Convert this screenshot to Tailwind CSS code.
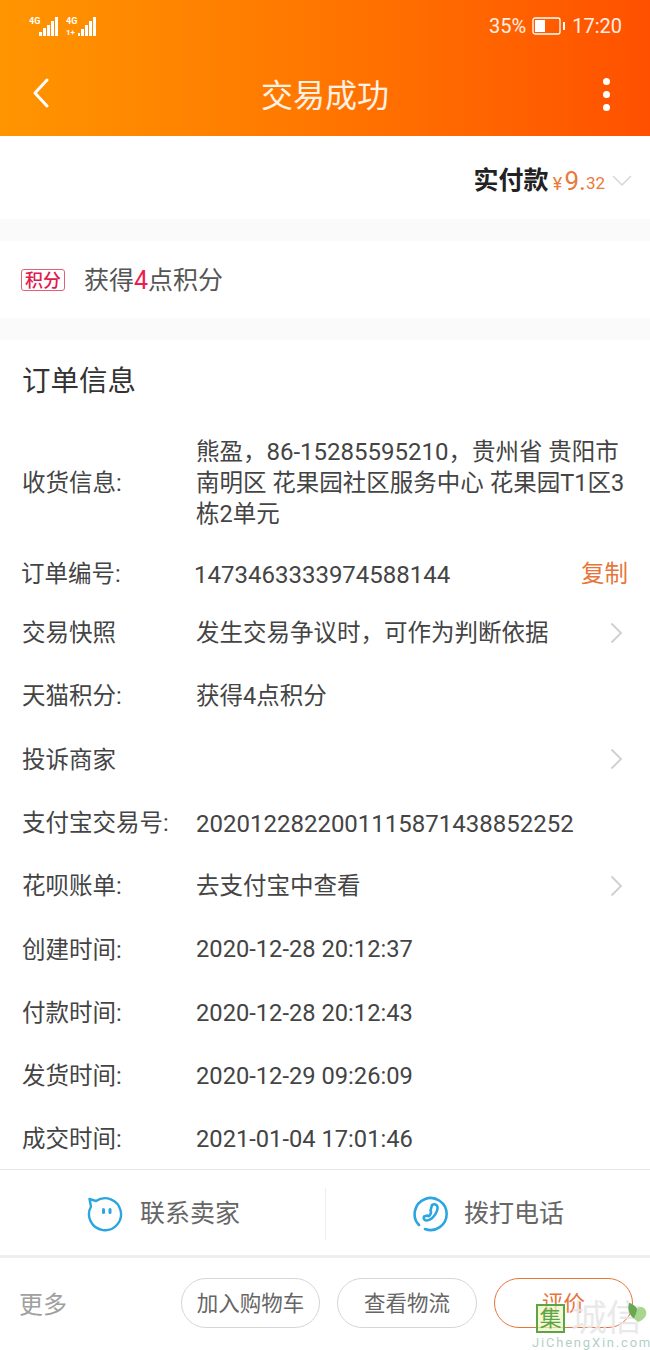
<!DOCTYPE html>
<html lang="zh-CN">
<head>
    <meta charset="UTF-8">
    <meta name="viewport" content="width=device-width, initial-scale=1.0">
    <title>交易成功</title>
    <script src="https://cdn.jsdelivr.net/npm/@tailwindcss/browser@4"></script>
</head>
<body class="bg-white">
    <div class="relative w-[650px] h-[1350px] overflow-hidden bg-white text-[#333] font-['Roboto','Noto_Sans_CJK_SC',sans-serif]">

        <!-- orange header -->
        <div class="h-[136px] bg-gradient-to-r from-[#ff9500] to-[#ff5000] text-white">
            <div class="h-[52px] pl-[29px] pr-[28px] flex justify-between items-center">
                <div class="flex gap-[6px]">
                    <svg width="31" height="22" viewBox="0 0 31 22" fill="#fff"><text x="0" y="9" font-size="9" font-weight="700" font-family="Roboto">4G</text><rect x="10" y="17" width="3" height="4"/><rect x="14" y="13" width="3" height="8"/><rect x="18" y="10" width="3" height="11"/><rect x="22" y="6" width="3" height="15"/><rect x="26" y="2" width="3" height="19"/></svg>
                    <svg width="31" height="22" viewBox="0 0 31 22" fill="#fff"><text x="0" y="9" font-size="9" font-weight="700" font-family="Roboto">4G</text><text x="0" y="20" font-size="8" font-weight="700" font-family="Roboto">1+</text><rect x="12" y="18" width="2" height="3"/><rect x="15" y="14" width="3" height="7"/><rect x="19" y="10" width="3" height="11"/><rect x="23" y="6" width="3" height="15"/><rect x="27" y="2" width="3" height="19"/></svg>
                </div>
                <div class="flex items-center text-[20px] text-white/90">
                    <span>35%</span>
                    <svg class="ml-[6px]" width="34" height="18" viewBox="0 0 34 18"><rect x="1" y="1" width="27" height="16" rx="2" fill="none" stroke="#fff" stroke-width="1.300"/><rect x="3" y="3" width="10" height="12" fill="#fff"/><rect x="31" y="5" width="2" height="8" fill="#fff"/></svg>
                    <span class="ml-[6px]">17:20</span>
                </div>
            </div>
            <div class="relative h-[84px] flex items-center justify-center pb-[2px]">
                <svg class="absolute left-[32px] top-[26px]" width="18" height="30" viewBox="0 0 18 30" fill="none" stroke="#fff" stroke-width="3" stroke-linecap="round" stroke-linejoin="round"><path d="M15 2 3 15l12 13"/></svg>
                <span class="text-[32px] text-white/90 font-['Noto_Sans_CJK_SC',sans-serif]">交易成功</span>
                <div class="absolute left-[603px] top-[26px] flex flex-col gap-[6px]">
                    <span class="size-[7px] rounded-full bg-white"></span>
                    <span class="size-[7px] rounded-full bg-white"></span>
                    <span class="size-[7px] rounded-full bg-white"></span>
                </div>
            </div>
        </div>

        <!-- total -->
        <div class="h-[83px] pr-[18px] pt-[7px] flex items-center justify-end">
            <span class="text-[25px] font-bold text-[#222]">实付款</span>
            <span class="ml-[3px] w-[12px] text-center text-[18px] text-[#e97a3c] mt-[4px]">¥</span>
            <span class="ml-[1px] text-[26px] text-[#e97a3c]">9.</span>
            <span class="text-[17px] text-[#e97a3c] mt-[5px]">32</span>
            <svg class="ml-[7px]" width="20" height="12" viewBox="0 0 20 12" fill="none" stroke="#d6d6d6" stroke-width="1.500"><path d="M1 1l9 9 9-9"/></svg>
        </div>
        <div class="h-[22px] bg-[#fafafa]"></div>

        <!-- points -->
        <div class="h-[77px] pl-[21px] pt-[3px] flex items-center">
            <span class="w-[44px] h-[22px] -mt-[2px] flex items-center justify-center border border-[#e0607e] rounded-[3px] text-[18px] font-medium text-[#e0194f]">积分</span>
            <span class="ml-[19px] text-[25px] text-[#555]">获得<span class="text-[#ee1d50]">4</span>点积分</span>
        </div>
        <div class="h-[22px] bg-[#fafafa]"></div>

        <!-- order info -->
        <div class="h-[829px] pl-[22px] text-[#444] text-[23.500px]">
            <div class="h-[80px] pt-[5px] flex items-center text-[28.500px] text-[#333]">订单信息</div>
            <div class="mt-[17px] flex items-center">
                <div class="w-[174px] shrink-0">收货信息:</div>
                <div class="w-[432px] leading-[31px]">熊盈，<span class="text-[24px]">86-15285595210</span>，贵州省 贵阳市 南明区 花果园社区服务中心 花果园T1区3栋2单元</div>
            </div>
            <div class="mt-[12px] h-[60px] pt-[6px] flex items-center -ml-[1px]">
                <div class="w-[173px] shrink-0">订单编号:</div>
                <div class="flex-1 text-[24px]">1473463333974588144</div>
                <div class="mr-[22px] text-[#e8743a]">复制</div>
            </div>
            <div class="h-[63.300px] flex items-center">
                <div class="w-[174px] shrink-0">交易快照</div>
                <div class="flex-1">发生交易争议时，可作为判断依据</div>
                <svg class="mr-[27px] mb-[2px]" width="13" height="22" viewBox="0 0 13 22" fill="none" stroke="#cfcfcf" stroke-width="1.800"><path d="M1.500 1.500 11 11l-9.500 9.500"/></svg>
            </div>
            <div class="h-[63.300px] flex items-center">
                <div class="w-[174px] shrink-0">天猫积分:</div>
                <div class="flex-1">获得4点积分</div>
            </div>
            <div class="h-[63.300px] flex items-center">
                <div class="w-[174px] shrink-0">投诉商家</div>
                <div class="flex-1"></div>
                <svg class="mr-[27px] mb-[2px]" width="13" height="22" viewBox="0 0 13 22" fill="none" stroke="#cfcfcf" stroke-width="1.800"><path d="M1.500 1.500 11 11l-9.500 9.500"/></svg>
            </div>
            <div class="h-[63.300px] flex items-center">
                <div class="w-[174px] shrink-0">支付宝交易号:</div>
                <div class="flex-1 text-[24px]">2020122822001115871438852252</div>
            </div>
            <div class="h-[63.300px] flex items-center">
                <div class="w-[174px] shrink-0">花呗账单:</div>
                <div class="flex-1">去支付宝中查看</div>
                <svg class="mr-[27px] mb-[2px]" width="13" height="22" viewBox="0 0 13 22" fill="none" stroke="#cfcfcf" stroke-width="1.800"><path d="M1.500 1.500 11 11l-9.500 9.500"/></svg>
            </div>
            <div class="h-[63.300px] flex items-center">
                <div class="w-[174px] shrink-0">创建时间:</div>
                <div class="flex-1 text-[23.700px]">2020-12-28 20:12:37</div>
            </div>
            <div class="h-[63.300px] flex items-center">
                <div class="w-[174px] shrink-0">付款时间:</div>
                <div class="flex-1 text-[23.700px]">2020-12-28 20:12:43</div>
            </div>
            <div class="h-[63.300px] flex items-center">
                <div class="w-[174px] shrink-0">发货时间:</div>
                <div class="flex-1 text-[23.700px]">2020-12-29 09:26:09</div>
            </div>
            <div class="h-[63.300px] flex items-center">
                <div class="w-[174px] shrink-0">成交时间:</div>
                <div class="flex-1 text-[23.700px]">2021-01-04 17:01:46</div>
            </div>
        </div>

        <!-- contact bar -->
        <div class="h-[89px] pt-[3px] border-t border-[#e8e8e8] border-b-[3px] border-b-[#eeeeee] flex items-center text-[25px] text-[#666]">
            <div class="w-[325px] flex items-center justify-center gap-[17px] pl-[2px]">
                <svg width="36" height="36" viewBox="0 0 36 36" fill="none" stroke="#2ba6e0" stroke-width="2.400"><path d="M2.500 3 9 5A16 16 0 1 1 4 10.500z" stroke-linejoin="round"/><rect x="15" y="12" width="3" height="6" rx="1.500" fill="#2ba6e0" stroke="none"/><rect x="21.500" y="12" width="3" height="6" rx="1.500" fill="#2ba6e0" stroke="none"/></svg>
                <span>联系卖家</span>
            </div>
            <div class="w-px h-[52px] bg-[#eeeeee]"></div>
            <div class="flex-1 flex items-center justify-center gap-[16px]">
                <svg width="36" height="36" viewBox="0 0 36 36" fill="none" stroke="#2ba6e0" stroke-width="2.600" stroke-linecap="round"><path d="M7 29A16 16 0 1 1 13 33"/><path d="M20 9c2-1.500 5-.5 5.500 2 .5 5-5 13-11 13.500-2 .2-3.500-2-2.500-4l3.500-1c1 1 1.500 1 2.500-.5s1.500-3 .5-4.500z" stroke-linejoin="round"/></svg>
                <span>拨打电话</span>
            </div>
        </div>

        <!-- actions -->
        <div class="h-[92px] pl-[19px] pr-[17px] pb-[2px] flex items-center text-[21.500px] text-[#666]">
            <div class="flex-1 pt-[4px] text-[24px] text-[#a0a0a0]">更多</div>
            <div class="flex gap-[17px]">
                <div class="w-[139px] h-[50px] pt-[3px] flex items-center justify-center rounded-full border border-[#d6d6d6]">加入购物车</div>
                <div class="w-[140px] h-[50px] pt-[3px] flex items-center justify-center rounded-full border border-[#d6d6d6]">查看物流</div>
                <div class="w-[139px] h-[50px] pt-[3px] flex items-center justify-center rounded-full border border-[#e8743a] text-[#e8743a]">评价</div>
            </div>
        </div>

        <!-- watermark -->
        <div class="absolute left-[531px] top-[1304px] w-[119px] h-[46px]">
            <div class="absolute left-[5px] top-0 w-[29px] h-[29px] flex items-center justify-center border-2 border-[#5ba548] bg-[#eef8c0]/70 text-[22px] leading-none text-[#5ba548]">集</div>
            <div class="absolute left-[40px] -top-[3px] text-[36px] leading-none tracking-[-1px] text-[#e6e6e6]/90 whitespace-nowrap">城信</div>
            <svg class="absolute left-[96px] -top-[2px]" width="21" height="21" viewBox="0 0 19 19"><path d="M2 1c3 1 5 2 7 5 2-2 5-2 7 0 3 3 2 9-6 12C4 14 0 8 2 1z" fill="#a9d68d"/><path d="M2 1c3 1 5 2 7 5 0 4-2 7-3 9C2 11 0 7 2 1z" fill="#6aa653"/></svg>
            <div class="absolute left-[1px] top-[31px] text-[13px] leading-[15px] tracking-[1.800px] text-[#b5cfc5] whitespace-nowrap">JiChengXin.com</div>
        </div>
    </div>
</body>
</html>
